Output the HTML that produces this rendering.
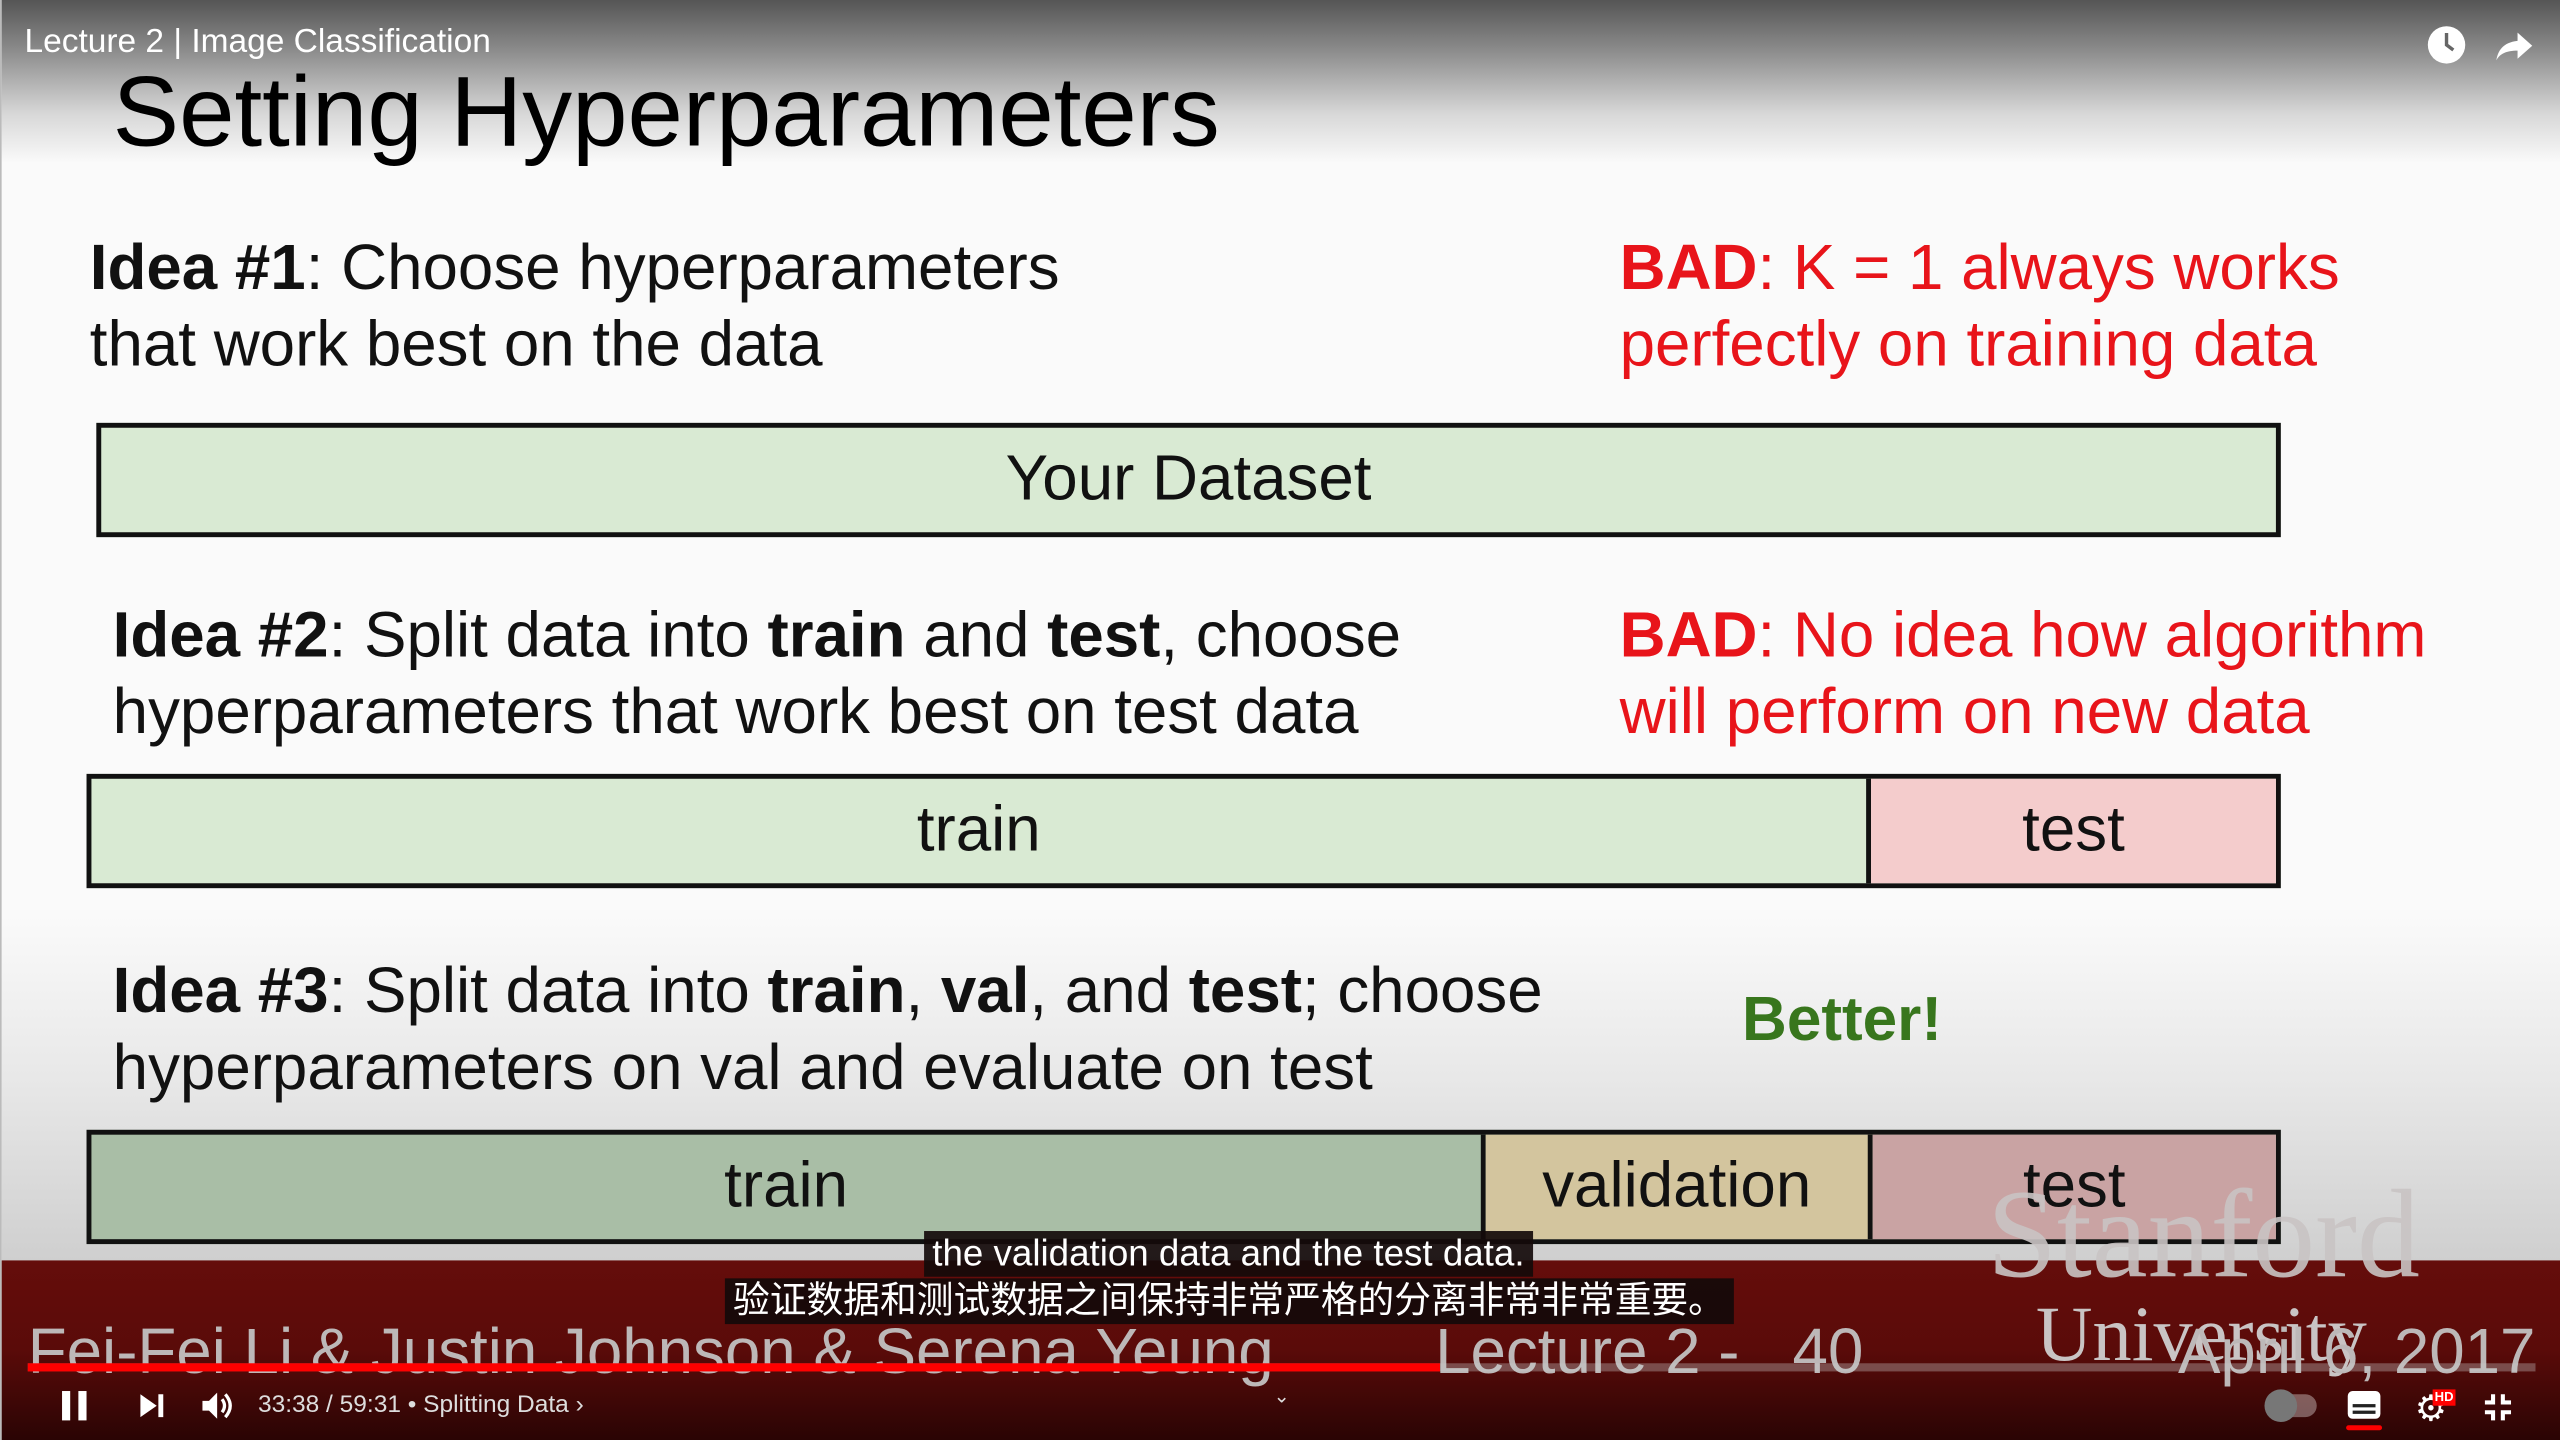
<!DOCTYPE html>
<html><head><meta charset="utf-8"><style>
*{margin:0;padding:0;box-sizing:border-box}
html,body{width:2560px;height:1440px;overflow:hidden;background:#fff}
#s{position:absolute;left:0;top:0;width:1568px;height:882px;transform:scale(1.632653);transform-origin:0 0;font-family:"Liberation Sans",sans-serif;
background:linear-gradient(#555 0px,#8a8a8a 30px,#d8d8d8 70px,#fafafa 100px,#fafafa 560px,#e8e8e8 660px,#cfcfcf 772px);overflow:hidden;border-left:1px solid #bbb}
.a{position:absolute;white-space:nowrap}
.t{font-size:39px;color:#111;line-height:47px}
.r{color:#e8141a}
.box{position:absolute;border:3px solid #111;display:flex}
.box div{display:flex;align-items:center;justify-content:center;font-size:39px;color:#111;height:100%}
#bot{position:absolute;left:0;top:772px;width:1568px;height:110px;background:linear-gradient(#650d0b,#5a0b09 50%,#2a0404)}
.ft{position:absolute;white-space:nowrap;color:#bdb8b8;font-size:39px}
.sub{position:absolute;background:rgba(20,10,10,.92);color:#fff;font-size:22.5px;font-family:"Liberation Sans","Noto Sans CJK SC",sans-serif;line-height:28px;height:28px;padding:0 5px;overflow:hidden}
</style></head><body><div id="s">
<div class="a" style="left:14px;top:14px;font-size:20.5px;color:#fff">Lecture 2 | Image Classification</div>
<svg class="a" style="left:1485px;top:15px" width="25" height="25" viewBox="0 0 24 24"><circle cx="12" cy="12" r="11" fill="#fff"/><path d="M12 5v7l4 3" stroke="#666" stroke-width="2" fill="none"/></svg>
<svg class="a" style="left:1526px;top:16px" width="26" height="24" viewBox="0 0 24 24"><path d="M14 4l9 8-9 8v-5C7 15 3 17 1 21c1-6 4-11 13-12z" fill="#fff"/></svg>
<div class="a" style="left:68px;top:33px;font-size:61px;color:#000">Setting Hyperparameters</div>

<div class="a t" style="left:54px;top:141px"><b>Idea #1</b>: Choose hyperparameters<br>that work best on the data</div>
<div class="a t r" style="left:991px;top:141px"><b>BAD</b>: K = 1 always works<br>perfectly on training data</div>
<div class="box" style="left:58px;top:259px;width:1338px;height:70px;background:#d9ead3"><div style="width:100%">Your Dataset</div></div>

<div class="a t" style="left:68px;top:366px"><b>Idea #2</b>: Split data into <b>train</b> and <b>test</b>, choose<br>hyperparameters that work best on test data</div>
<div class="a t r" style="left:991px;top:366px"><b>BAD</b>: No idea how algorithm<br>will perform on new data</div>
<div class="box" style="left:52px;top:474px;width:1344px;height:70px;background:#d9ead3"><div style="width:1090px;border-right:3px solid #111">train</div><div style="flex:1;background:#f4cccc">test</div></div>

<div class="a t" style="left:68px;top:584px"><b>Idea #3</b>: Split data into <b>train</b>, <b>val</b>, and <b>test</b>; choose<br>hyperparameters on val and evaluate on test</div>
<div class="a" style="left:1066px;top:604px;font-size:38px;font-weight:bold;color:#38761d">Better!</div>
<div class="box" style="left:52px;top:692px;width:1344px;height:70px;background:#a9bea6"><div style="width:854px;border-right:3px solid #111">train</div><div style="width:237px;border-right:3px solid #111;background:#d3c59e">validation</div><div style="flex:1;background:#c9a3a3">test</div></div>

<div id="bot"></div>
<div class="a" style="left:1216px;top:712px;font-family:'Liberation Serif',serif;font-size:77px;color:#c9c4c4;opacity:.9">Stanford</div>
<div class="a" style="left:1246px;top:790px;font-family:'Liberation Serif',serif;font-size:48px;color:#c9c4c4">University</div>
<div class="ft" style="left:16px;top:807px">Fei-Fei Li &amp; Justin Johnson &amp; Serena Yeung</div>
<div class="ft" style="left:878px;top:807px">Lecture 2 -&nbsp;&nbsp;&nbsp;40</div>
<div class="ft" style="left:1333px;top:807px">April 6, 2017</div>
<div class="sub" style="left:565px;top:754px">the validation data and the test data.</div>
<div class="sub" style="left:443px;top:783px">验证数据和测试数据之间保持非常严格的分离非常非常重要。</div>
<div class="a" style="left:16px;top:835px;width:1536px;height:5px;background:rgba(200,200,200,.35)"></div>
<div class="a" style="left:16px;top:835px;width:865px;height:5px;background:#f00"></div>
<div class="a" style="left:37px;top:852px;width:5px;height:18px;background:#fff"></div>
<div class="a" style="left:47px;top:852px;width:5px;height:18px;background:#fff"></div>
<svg class="a" style="left:83px;top:852px" width="18" height="18" viewBox="0 0 18 18"><path d="M2 2l10 7-10 7z M13 2h3v14h-3z" fill="#fff"/></svg>
<svg class="a" style="left:121px;top:851px" width="22" height="20" viewBox="0 0 22 20"><path d="M2 7h4l5-5v16l-5-5H2z" fill="#fff"/><path d="M14 6q3 4 0 8M16 3q6 7 0 14" stroke="#fff" stroke-width="2" fill="none"/></svg>
<div class="a" style="left:157px;top:852px;font-size:15px;color:#ddd">33:38 / 59:31 • Splitting Data ›</div>
<div class="a" style="left:779px;top:848px;font-size:12px;color:#ddd">⌄</div>
<div class="a" style="left:1388px;top:854px;width:30px;height:14px;border-radius:7px;background:rgba(255,255,255,.35)"></div>
<div class="a" style="left:1386px;top:851px;width:20px;height:20px;border-radius:10px;background:#777"></div>
<div class="a" style="left:1437px;top:852px;width:20px;height:17px;border-radius:3px;background:#fff"></div>
<div class="a" style="left:1440px;top:860px;width:14px;height:2px;background:#222"></div>
<div class="a" style="left:1440px;top:864px;width:14px;height:2px;background:#222"></div>
<div class="a" style="left:1436px;top:873px;width:22px;height:3px;background:#f00;border-radius:2px"></div>
<div class="a" style="left:1478px;top:850px;font-size:22px;color:#fff">⚙</div>
<div class="a" style="left:1489px;top:851px;width:14px;height:10px;background:#f00;font-size:8px;color:#fff;font-weight:bold;text-align:center;line-height:10px">HD</div>
<svg class="a" style="left:1519px;top:852px" width="20" height="20" viewBox="0 0 20 20"><path d="M7 2v5H2M13 2v5h5M7 18v-5H2M13 18v-5h5" stroke="#fff" stroke-width="2.5" fill="none"/></svg>
</div></body></html>
